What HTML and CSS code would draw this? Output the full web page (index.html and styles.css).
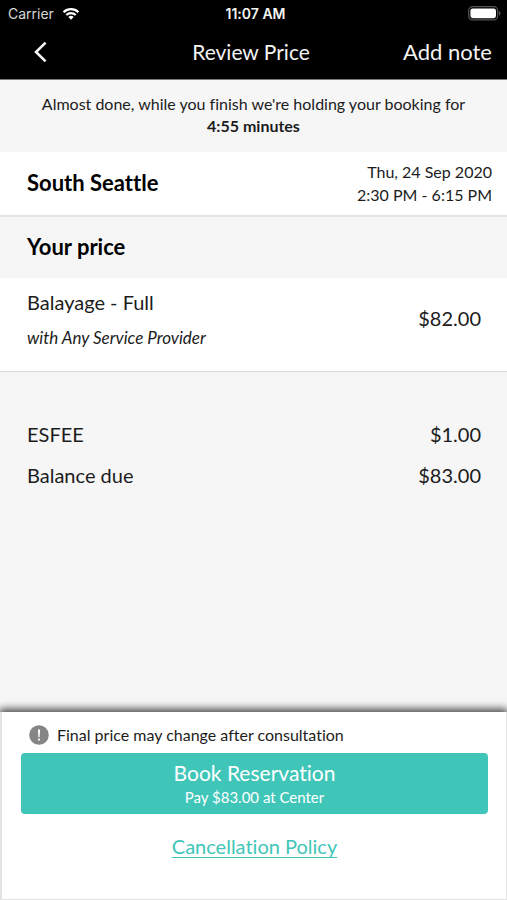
FILE: index.html
```html
<!DOCTYPE html>
<html lang="en">
<head>
<meta charset="utf-8">
<meta name="viewport" content="width=device-width, initial-scale=1">
<title>Review Price</title>
<link rel="stylesheet" href="styles.css">
</head>
<body>
<header class="header">
  <div class="status">
    <span class="status-carrier">Carrier
      <svg class="wifi" viewBox="0 0 18 13" width="18" height="13" aria-hidden="true">
        <path d="M1.6 5.2a10.6 10.6 0 0 1 14.8 0" fill="none" stroke="currentColor" stroke-width="2.2"/>
        <path d="M4.3 8.1a6.7 6.7 0 0 1 9.4 0" fill="none" stroke="currentColor" stroke-width="2.1"/>
        <path d="M9 12.8L6.3 10.1a3.8 3.8 0 0 1 5.4 0z" fill="currentColor"/>
      </svg>
    </span>
    <time class="status-time">11:07 AM</time>
    <span class="status-battery">
      <svg viewBox="0 0 33 15" width="33" height="15" aria-hidden="true">
        <rect x="0.7" y="0.7" width="29" height="13.2" rx="4" fill="none" stroke="#555" stroke-width="1.2"/>
        <rect x="2.4" y="2.4" width="25.6" height="9.8" rx="2.4" fill="#fff"/>
        <path d="M31 5q1.5.6 1.5 2.3T31 9.6z" fill="#555"/>
      </svg>
    </span>
  </div>
  <nav class="nav">
    <button class="back" type="button" aria-label="Back">
      <svg viewBox="0 0 14 22" width="14" height="22" aria-hidden="true"><path d="M12.6 1.6L3 11l9.6 9.4" fill="none" stroke="currentColor" stroke-width="2.6"/></svg>
    </button>
    <h1 class="title">Review Price</h1>
    <button class="note" type="button">Add note</button>
  </nav>
</header>
<main class="main">
  <p class="notice">Almost done, while you finish we're holding your booking for <strong class="timer">4:55 minutes</strong></p>
  <section class="place">
    <h2 class="heading">South Seattle</h2>
    <p class="when">Thu, 24 Sep 2020<br>2:30 PM - 6:15 PM</p>
  </section>
  <h2 class="heading section-title">Your price</h2>
  <section class="service">
    <div class="service-info">
      <h3 class="service-name">Balayage - Full</h3>
      <p class="provider">with Any Service Provider</p>
    </div>
    <span class="amount">$82.00</span>
  </section>
  <dl class="totals">
    <div class="total"><dt>ESFEE</dt><dd>$1.00</dd></div>
    <div class="total"><dt>Balance due</dt><dd>$83.00</dd></div>
  </dl>
</main>
<footer class="footer">
  <p class="warning">
    <svg viewBox="0 0 20 20" width="20" height="20" aria-hidden="true">
      <circle cx="10" cy="10" r="9.8" fill="#858585"/>
      <path d="M8.9 4.4h2.2l-.5 7.8H9.4z" fill="#fff"/>
      <circle cx="10" cy="14.6" r="1.1" fill="#fff"/>
    </svg>
    Final price may change after consultation
  </p>
  <button class="book" type="button">
    <span class="book-title">Book Reservation</span>
    <span class="book-sub">Pay $83.00 at Center</span>
  </button>
  <a class="policy" href="#policy">Cancellation Policy</a>
</footer>
</body>
</html>
```
FILE: styles.css
```css
* {
  box-sizing: border-box;
}

body {
  display: flex;
  flex-direction: column;
  min-height: 100vh;
  margin: 0;
  background: #f6f6f6;
  color: #1c1c1c;
  font-family: Lato, "Liberation Sans", sans-serif;
  font-size: 20px;
  line-height: 24px;
  font-variant-ligatures: none;
}

h1, h2, h3, p, dl, dd {
  margin: 0;
  font-size: inherit;
  font-weight: 400;
}

button {
  padding: 0;
  border: 0;
  background: none;
  color: inherit;
  font: inherit;
  font-variant-ligatures: none;
  cursor: pointer;
}

svg {
  display: block;
  flex: none;
}

.header {
  background: #000;
  color: #f4f4f4;
  border-bottom: 1px solid #777;
}

.status {
  display: grid;
  grid-template-columns: 1fr auto 1fr;
  align-items: center;
  height: 27px;
  padding: 0 6px 0 8px;
  font-family: Inter, sans-serif;
  font-size: 14px;
}

.status-carrier {
  display: flex;
  align-items: center;
  gap: 8px;
  color: #d8d8d8;
}

.wifi {
  color: #fff;
}

.status-time {
  padding-left: 2px;
  font-weight: 600;
}

.status-battery {
  justify-self: end;
}

.nav {
  display: grid;
  grid-template-columns: 1fr auto 1fr;
  align-items: center;
  height: 52px;
  padding: 0 15px 2px 33px;
  font-size: 21px;
}

.title {
  margin-right: 23px;
}

.back {
  justify-self: start;
}

.note {
  justify-self: end;
  font-size: 22px;
}

.main {
  flex: 1;
}

.notice {
  padding: 13px 24px 15px;
  font-size: 16px;
  line-height: 22px;
  text-align: center;
}

.timer {
  display: block;
  font-weight: 700;
}

.place {
  display: flex;
  justify-content: space-between;
  align-items: center;
  padding: 8px 15px 9px 27px;
  background: #fff;
  border-bottom: 2px solid #e4e4e4;
}

.heading {
  color: #000;
  font-size: 22px;
  font-weight: 700;
}

.when {
  font-size: 16px;
  line-height: 23px;
  text-align: right;
}

.section-title {
  padding: 18px 27px 19px;
}

.service {
  display: flex;
  justify-content: space-between;
  padding: 12px 26px 21px 27px;
  background: #fff;
  border-bottom: 1px solid #d8d8d8;
}

.amount {
  margin-top: 16px;
}

.provider {
  margin-top: 12px;
  font-size: 17px;
  font-style: italic;
}

.totals {
  display: grid;
  gap: 17px;
  padding: 50px 26px 24px 27px;
}

.total {
  display: flex;
  justify-content: space-between;
}

.footer {
  display: flex;
  flex-direction: column;
  padding: 12px 18px 41px 19px;
  background: #fff;
  border: solid #e4e4e4;
  border-width: 0 1px 1px 2px;
  box-shadow: 0 -2px 8px 1px #444;
  clip-path: inset(-16px 0 0 0);
}

.warning {
  display: flex;
  align-items: center;
  gap: 8px;
  margin: 0 8px 7px;
  font-size: 16px;
  line-height: 22px;
}

.book {
  display: flex;
  flex-direction: column;
  align-items: center;
  padding: 7px 0 6px;
  border-radius: 4px;
  background: #40c6b9;
  color: #fff;
}

.book-title {
  font-size: 21px;
  line-height: 26px;
}

.book-sub {
  font-size: 15px;
  line-height: 22px;
}

.policy {
  align-self: center;
  margin-top: 20px;
  color: #40c6b9;
  font-size: 20px;
  text-decoration-thickness: 1px;
  text-underline-offset: 3px;
}
```
